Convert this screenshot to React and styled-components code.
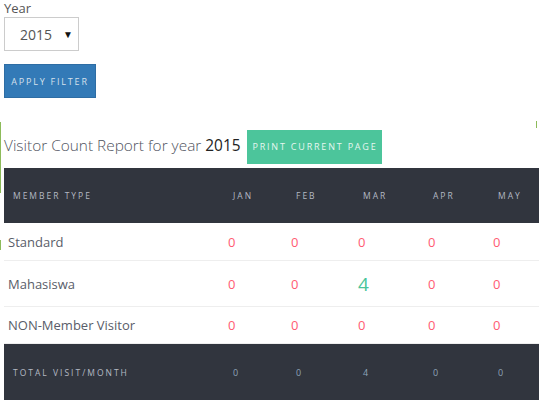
import React from 'react'
import styled, { createGlobalStyle } from 'styled-components'

const GlobalStyle = createGlobalStyle`
	html, body {
		margin: 0;
		padding: 0;
		background: #fff;
	}
	body {
		font-family: 'Open Sans', 'Liberation Sans', sans-serif;
		color: #555;
		overflow: hidden;
	}
`

const Page = styled.div`
	position: relative;
	width: 539px;
	height: 407px;
	padding: 0 0 0 4px;
	box-sizing: border-box;
`

const Edge = styled.div`
	position: absolute;
	width: 1px;
	background: #8dbb5a;
	left: ${(p) => p.left}px;
	top: ${(p) => p.top}px;
	height: ${(p) => p.h}px;
`

const FilterForm = styled.form`
	display: flex;
	flex-direction: column;
	align-items: flex-start;
	margin: 0;
`

const Label = styled.label`
	font-size: 13px;
	line-height: 17px;
	color: #555;
`

const SelectWrap = styled.div`
	position: relative;
	width: 75px;
	height: 34px;
`

const Select = styled.select`
	appearance: none;
	width: 75px;
	height: 34px;
	border: 1px solid #ccc;
	border-radius: 0;
	background: #fff;
	font-family: 'Open Sans', 'Liberation Sans', sans-serif;
	font-size: 14px;
	color: #555;
	padding: 0 0 0 15px;
	outline: none;
`

const Caret = styled.span`
	position: absolute;
	right: 6px;
	top: 12px;
	font-size: 10px;
	line-height: 10px;
	color: #111;
	pointer-events: none;
`

const Button = styled.button`
	height: 34px;
	padding: 0 ${(p) => p.pad}px;
	border: 1px solid ${(p) => p.border};
	border-radius: 0;
	background: ${(p) => p.bg};
	color: ${(p) => p.fg};
	font-family: 'Open Sans', 'Liberation Sans', sans-serif;
	font-size: 9px;
	letter-spacing: 1.8px;
	text-transform: uppercase;
	cursor: pointer;
`

const FilterButton = styled(Button)`
	margin-top: 13px;
	width: 92px;
	height: 34px;
`

const ReportHead = styled.div`
	display: flex;
	align-items: center;
	margin-top: 31px;
	height: 35px;
`

const Title = styled.h3`
	margin: -2px 7px 0 0;
	font-size: 15.4px;
	font-weight: 300;
	color: #4f5360;
	strong {
		font-weight: 400;
		color: #222;
	}
`

const PrintButton = styled(Button)`
	width: 135px;
	height: 34px;
`

const Table = styled.table`
	margin-top: 4px;
	width: 535px;
	border-collapse: collapse;
	table-layout: fixed;
`

const HeadCell = styled.th`
	background: #31353e;
	color: #b4b9c3;
	font-size: 8.5px;
	font-weight: 400;
	letter-spacing: 2px;
	text-align: left;
	padding: 0 0 0 9px;
	height: ${(p) => p.h || 55}px;
`

const Row = styled.tr`
	border-bottom: 1px solid #eee;
`

const Cell = styled.td`
	padding: 0 0 0 4px;
	height: ${(p) => p.h}px;
	font-size: ${(p) => (p.big ? 19 : 13)}px;
	color: ${(p) => (p.label ? '#595d69' : p.big ? '#4cc59b' : '#ff5b72')};
	text-align: left;
	vertical-align: middle;
`

const FootCell = styled.td`
	background: #31353e;
	color: ${(p) => (p.label ? '#b4b9c3' : '#8ea3b8')};
	font-size: ${(p) => (p.label ? 8.5 : 9)}px;
	letter-spacing: ${(p) => (p.label ? 2 : 0)}px;
	padding: 0 0 0 9px;
	height: 56px;
`

const months = ['Jan', 'Feb', 'Mar', 'Apr', 'May']
const widths = [220, 63, 67, 70, 65, 50]

const rows = [
	{ name: 'Standard', values: [0, 0, 0, 0, 0], h: 37 },
	{ name: 'Mahasiswa', values: [0, 0, 4, 0, 0], h: 45 },
	{ name: 'NON-Member Visitor', values: [0, 0, 0, 0, 0], h: 36 },
]

export default function App() {
	return (
		<>
			<GlobalStyle />
			<Page>
				<FilterForm onSubmit={(e) => e.preventDefault()}>
					<Label>Year</Label>
					<SelectWrap>
						<Select defaultValue='2015'>
							<option>2014</option>
							<option>2015</option>
							<option>2016</option>
						</Select>
						<Caret>▼</Caret>
					</SelectWrap>
					<FilterButton bg='#337ab7' border='#2e6da4' fg='#d6e0ec' pad={0}>
						Apply Filter
					</FilterButton>
				</FilterForm>

				<ReportHead>
					<Title>
						Visitor Count Report for year <strong>2015</strong>
					</Title>
					<PrintButton bg='#4cc59b' border='#4cc59b' fg='#e6f6f0' pad={0}>
						Print Current Page
					</PrintButton>
				</ReportHead>

				<Table>
					<colgroup>
						{widths.map((w, i) => (
							<col key={i} style={{ width: w }} />
						))}
					</colgroup>
					<thead>
						<tr>
							<HeadCell>MEMBER TYPE</HeadCell>
							{months.map((m) => (
								<HeadCell key={m}>{m.toUpperCase()}</HeadCell>
							))}
							<HeadCell />
						</tr>
					</thead>
					<tbody>
						{rows.map((r) => (
							<Row key={r.name}>
								<Cell label h={r.h}>{r.name}</Cell>
								{r.values.map((v, i) => (
									<Cell key={i} h={r.h} big={v > 0}>
										{v}
									</Cell>
								))}
								<Cell h={r.h} />
							</Row>
						))}
					</tbody>
					<tfoot>
						<tr>
							<FootCell label>TOTAL VISIT/MONTH</FootCell>
							{[0, 0, 4, 0, 0].map((v, i) => (
								<FootCell key={i}>{v}</FootCell>
							))}
							<FootCell />
						</tr>
					</tfoot>
				</Table>

				<Edge left={0} top={122} h={71} />
				<Edge left={0} top={240} h={10} />
				<Edge left={536} top={121} h={7} />
			</Page>
		</>
	)
}
